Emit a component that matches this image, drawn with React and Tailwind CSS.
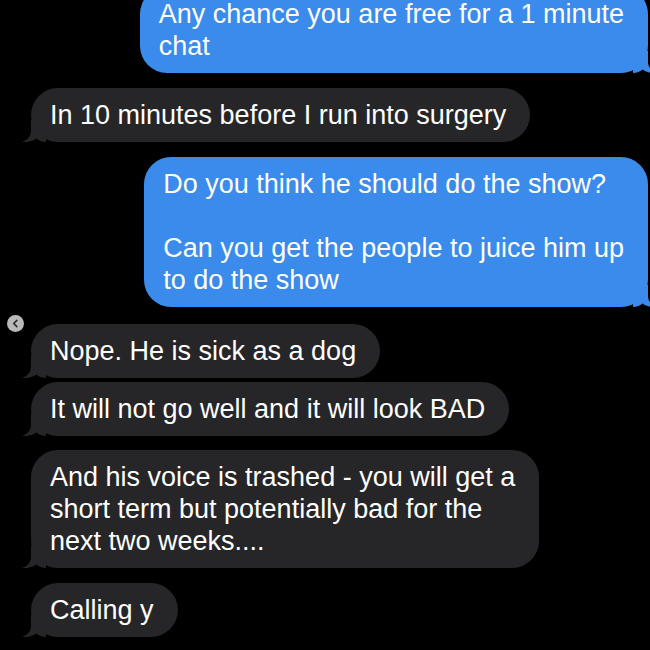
import React from "react";

// bubble tail drawn at the bottom corner of each bubble
const Tail = ({ side, color }) => {
  if (side === "left") {
    return (
      <svg
        className="absolute -left-[9px] bottom-0"
        width="24"
        height="22"
        viewBox="0 0 24 22"
      >
        <path
          d="M9 0 L9 11 C9 16 6 19.5 0 22 C6 22.5 11 21 14.5 18.5 C17 20.5 20 22 24 22 L24 0 Z"
          fill={color}
        />
      </svg>
    );
  }
  return (
    <svg
      className="absolute -right-[9px] bottom-0"
      width="24"
      height="22"
      viewBox="0 0 24 22"
    >
      <path
        d="M15 0 L15 11 C15 16 18 19.5 24 22 C18 22.5 13 21 9.5 18.5 C7 20.5 4 22 0 22 L0 0 Z"
        fill={color}
      />
    </svg>
  );
};

const Bubble = ({ mine, lines, className = "" }) => {
  const color = mine ? "#3a8bec" : "#262628";
  return (
    <div
      className={`relative w-fit rounded-[27px] pl-[19px] pr-[24px] py-[11px] text-[27px] leading-[32px] text-white ${
        mine ? "self-end mr-[2px] bg-[#3a8bec]" : "self-start ml-[31px] bg-[#262628]"
      } ${className}`}
    >
      {lines.map((line, i) => (
        <div key={i} className="whitespace-nowrap">
          {line === "" ? "\u00a0" : line}
        </div>
      ))}
      <Tail side={mine ? "right" : "left"} color={color} />
    </div>
  );
};

export default function App() {
  return (
    <div
      className="relative w-[650px] h-[650px] overflow-hidden bg-black"
      style={{ fontFamily: '"Liberation Sans", Arial, sans-serif' }}
    >
      <div className="flex flex-col">
        <Bubble
          mine
          className="-mt-[13px] leading-[31px]"
          lines={["Any chance you are free for a 1 minute", "chat"]}
        />
        <Bubble
          className="mt-[15px]"
          lines={["In 10 minutes before I run into surgery"]}
        />
        <Bubble
          mine
          className="mt-[15px]"
          lines={[
            "Do you think he should do the show?",
            "",
            "Can you get the people to juice him up",
            "to do the show",
          ]}
        />
        <Bubble className="mt-[17px]" lines={["Nope. He is sick as a dog"]} />
        <Bubble
          className="mt-[4px]"
          lines={["It will not go well and it will look BAD"]}
        />
        <Bubble
          className="mt-[14px]"
          lines={[
            "And his voice is trashed - you will get a",
            "short term but potentially bad for the",
            "next two weeks....",
          ]}
        />
        <Bubble className="mt-[15px]" lines={["Calling y"]} />
      </div>

      {/* carousel back arrow */}
      <div className="absolute left-[7px] top-[315px] flex h-[17px] w-[17px] items-center justify-center rounded-full bg-[#b9b9b9]">
        <svg width="9" height="9" viewBox="0 0 10 10">
          <path
            d="M6.5 1.5 L3 5 L6.5 8.5"
            fill="none"
            stroke="#2a2a2a"
            strokeWidth="1.8"
            strokeLinecap="round"
            strokeLinejoin="round"
          />
        </svg>
      </div>
    </div>
  );
}
